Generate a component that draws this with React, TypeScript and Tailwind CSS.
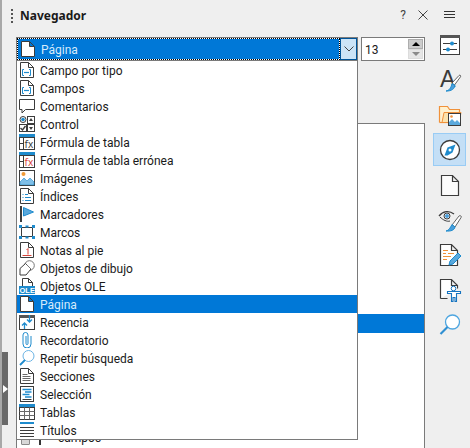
import React from 'react';

const DARK = '#3c3c3c';
const BLUE = '#1e8bcd';

function DocBase({ fill = '#fff' }: { fill?: string }) {
  return <path d="M1.500.5h8l5 5v10h-13zM9.500.5v5h5" fill={fill} stroke={DARK} strokeWidth="1" />;
}

function Ico({ children }: { children: React.ReactNode }) {
  return (
    <svg width="16" height="16" viewBox="0 0 16 16" fill="none" className="shrink-0">
      {children}
    </svg>
  );
}

function FieldIcon() {
  return (
    <Ico>
      <DocBase />
      <path d="M5 7.500H3.500v6H5M10 7.500h1.500v6H10" stroke={BLUE} />
      <path d="M5 10.500h5" stroke={BLUE} strokeWidth="1.200" />
    </Ico>
  );
}

function CommentIcon() {
  return (
    <Ico>
      <path d="M.5 1.500h15v10H6.500L3 15v-3.500H.5z" fill="#fff" stroke={DARK} />
    </Ico>
  );
}

function ControlIcon() {
  return (
    <Ico>
      <circle cx="4" cy="3.500" r="3" fill="#fff" stroke={DARK} />
      <circle cx="4" cy="3.500" r="1.800" fill={BLUE} />
      <rect x="8.500" y=".5" width="7" height="7" fill="#fff" stroke={DARK} />
      <path d="M12 2l2 3h-4z" fill={DARK} />
      <rect x=".5" y="8.500" width="7" height="7" fill="#fff" stroke={DARK} />
      <path d="M1.500 12l2 2 3-4" stroke={DARK} strokeWidth="1.400" />
      <rect x="8.500" y="8.500" width="7" height="7" fill="#fff" stroke={DARK} />
      <path d="M10 11h4l-2 3z" fill={DARK} />
    </Ico>
  );
}

function FormulaIcon({ color }: { color: string }) {
  return (
    <Ico>
      <rect x=".5" y="3.500" width="15" height="12" fill="#fff" stroke={DARK} />
      <rect x="0" y="0" width="16" height="3" fill={BLUE} />
      <path d="M.5 9.500h4M4.500 3.500v12" stroke={DARK} />
      <text x="5.600" y="14" fontSize="10" fontFamily="'Noto Sans', sans-serif" fill={color}>fx</text>
    </Ico>
  );
}

function ImageIcon() {
  return (
    <Ico>
      <rect x=".5" y=".5" width="15" height="15" fill="#fff" stroke={DARK} />
      <circle cx="4.500" cy="4" r="2" fill="#f09a37" />
      <path d="M1 14.500V12l4-4 3 3 3-3 4 4v3z" fill="#7fbfe8" stroke={BLUE} strokeWidth=".6" />
    </Ico>
  );
}

function IndexIcon() {
  return (
    <Ico>
      <DocBase />
      <path d="M3.500 6.500h1M6 6.500h3M3.500 9.500h1M6 9.500h6M3.500 12.500h1M6 12.500h6" stroke={BLUE} />
    </Ico>
  );
}

function BookmarkIcon() {
  return (
    <Ico>
      <rect x="1" y="0" width="2" height="16" fill={DARK} />
      <path d="M4.500 1.500L14.500 6l-10 4z" fill="#5aa9dd" stroke={BLUE} />
    </Ico>
  );
}

function FrameIcon() {
  return (
    <Ico>
      <rect x="2.500" y="3.500" width="11" height="9" fill="#fff" stroke={DARK} />
      <g fill={BLUE}>
        <rect x="0" y="1" width="3" height="3" />
        <rect x="13" y="1" width="3" height="3" />
        <rect x="0" y="12" width="3" height="3" />
        <rect x="13" y="12" width="3" height="3" />
        <rect x="6.500" y="1.500" width="3" height="2" />
        <rect x="6.500" y="12.500" width="3" height="2" />
      </g>
    </Ico>
  );
}

function FootnoteIcon() {
  return (
    <Ico>
      <DocBase />
      <path d="M9 6.500v6M7.500 8L9 6.500" stroke="#d9443a" />
      <path d="M3.500 13.500h9" stroke="#d9443a" />
    </Ico>
  );
}

function DrawIcon() {
  return (
    <Ico>
      <circle cx="10.500" cy="5.500" r="4.800" fill="#fff" stroke="#777" />
      <path d="M1 8.500L6.500 3.500 12 9 7 15H1z" fill="#fff" stroke={DARK} />
      <path d="M7.500 4.500l4.500 4.500" stroke="#777" />
    </Ico>
  );
}

function OleIcon() {
  return (
    <Ico>
      <path d="M3.500.5h6l4 4v4h-10zM9.500.5v4h4" fill="#fff" stroke={DARK} />
      <rect x="0" y="8" width="16" height="8" fill={BLUE} />
      <text x=".5" y="15" fontSize="7.500" fontWeight="700" fontFamily="'Liberation Sans', sans-serif" fill="#fff">OLE</text>
    </Ico>
  );
}

function PageIcon() {
  return (
    <Ico>
      <DocBase />
    </Ico>
  );
}

function RecencyIcon() {
  return (
    <Ico>
      <rect x=".5" y="2.500" width="15" height="13" fill="#fff" stroke={DARK} />
      <rect x="0" y="1" width="16" height="3" fill="#555" />
      <path d="M10.500 1v7M8 5.500l2.500 2.500L13 5.500M5.500 15V9M3 11.500L5.500 9 8 11.500" stroke={BLUE} strokeWidth="1.300" />
    </Ico>
  );
}

function ClipIcon() {
  return (
    <Ico>
      <path d="M12 4v8a4 4 0 0 1-8 0V3a2.500 2.500 0 0 1 5 0v8.500a1 1 0 0 1-2 0V4" stroke={BLUE} />
    </Ico>
  );
}

function SearchIcon() {
  return (
    <Ico>
      <circle cx="9.500" cy="6" r="5.500" fill="#fff" stroke="#6db4e4" />
      <path d="M6 10L1 15" stroke={BLUE} strokeWidth="1.800" />
    </Ico>
  );
}

function SectionIcon() {
  return (
    <Ico>
      <DocBase />
      <path d="M3.500 6.500h5M3.500 8.500h8M3.500 10.500h8M3.500 12.500h8" stroke="#6a6a6a" />
    </Ico>
  );
}

function SelectionIcon() {
  return (
    <Ico>
      <rect x="1.500" y=".5" width="13" height="15" fill="#fff" stroke={DARK} />
      <path d="M3.500 3.500h9M6 6h6.500M3.500 8.500h7M6 11h6.500" stroke={BLUE} strokeWidth="1.300" />
      <path d="M3.500 13.500h9" stroke={DARK} />
    </Ico>
  );
}

function TableIcon() {
  return (
    <Ico>
      <rect x=".5" y="3.500" width="15" height="12" fill="#fff" stroke={DARK} />
      <rect x="0" y="0" width="16" height="3" fill={BLUE} />
      <path d="M5.500 3.500v12M10.500 3.500v12M.5 7.500h15M.5 11.500h15" stroke="#6a6a6a" />
    </Ico>
  );
}

function HeadingIcon() {
  return (
    <Ico>
      <rect x="1" y="0" width="14" height="2" fill={BLUE} />
      <path d="M1 5.500h14M1 8.500h14M1 11.500h14M1 14.500h14" stroke={DARK} />
    </Ico>
  );
}

const items: { label: string; icon: React.ReactNode }[] = [
  { label: 'Campo por tipo', icon: <FieldIcon /> },
  { label: 'Campos', icon: <FieldIcon /> },
  { label: 'Comentarios', icon: <CommentIcon /> },
  { label: 'Control', icon: <ControlIcon /> },
  { label: 'Fórmula de tabla', icon: <FormulaIcon color={DARK} /> },
  { label: 'Fórmula de tabla errónea', icon: <FormulaIcon color="#d9443a" /> },
  { label: 'Imágenes', icon: <ImageIcon /> },
  { label: 'Índices', icon: <IndexIcon /> },
  { label: 'Marcadores', icon: <BookmarkIcon /> },
  { label: 'Marcos', icon: <FrameIcon /> },
  { label: 'Notas al pie', icon: <FootnoteIcon /> },
  { label: 'Objetos de dibujo', icon: <DrawIcon /> },
  { label: 'Objetos OLE', icon: <OleIcon /> },
  { label: 'Página', icon: <PageIcon /> },
  { label: 'Recencia', icon: <RecencyIcon /> },
  { label: 'Recordatorio', icon: <ClipIcon /> },
  { label: 'Repetir búsqueda', icon: <SearchIcon /> },
  { label: 'Secciones', icon: <SectionIcon /> },
  { label: 'Selección', icon: <SelectionIcon /> },
  { label: 'Tablas', icon: <TableIcon /> },
  { label: 'Títulos', icon: <HeadingIcon /> },
];

function SideIcon({ children }: { children: React.ReactNode }) {
  return (
    <svg width="24" height="24" viewBox="0 0 24 24" fill="none">
      {children}
    </svg>
  );
}

const sidebar: React.ReactNode[] = [
  <SideIcon key="props">
    <rect x="2.500" y="2.500" width="19" height="19" fill="#fff" stroke={DARK} />
    <rect x="2" y="2" width="20" height="3" fill="#555" />
    <path d="M5 10.500h14M5 16.500h14" stroke={DARK} />
    <circle cx="14" cy="10.500" r="2" fill={BLUE} />
    <circle cx="10" cy="16.500" r="2" fill={BLUE} />
  </SideIcon>,
  <SideIcon key="styles">
    <text x="2" y="19" fontSize="23" fontFamily="'Liberation Sans', sans-serif" fill="#3a3a3a">A</text>
    <path d="M14 15l7-7.500c1-1 2.200.3 1.500 1.300L16.500 17z" fill="#fff" stroke={DARK} strokeWidth=".8" />
    <path d="M8 23c3-.2 5-3 6-7.500l3 2c-.5 3-3 5.700-9 5.500z" fill="#4a9fdc" stroke={BLUE} />
  </SideIcon>,
  <SideIcon key="gallery">
    <path d="M1.500 19.500V3.500h8l2 3h10v3" fill="#fff1cf" stroke="#f0913a" strokeWidth="1.200" />
    <path d="M1.500 19.500h20" stroke="#f0913a" strokeWidth="1.200" />
    <path d="M4 19.500l2-10h17l-2 10z" fill="#fbe3ae" stroke="#f0913a" />
    <rect x="10.500" y="10.500" width="12" height="12" fill="#fff" stroke={DARK} />
    <circle cx="13.500" cy="13.500" r="1.300" fill="#f0913a" />
    <path d="M11 22v-3l3-3 3 3 2-2 3 3v2z" fill="#5aa9dd" />
  </SideIcon>,
  <SideIcon key="nav">
    <circle cx="12" cy="12" r="9.500" fill="#fff" stroke={DARK} strokeWidth="1.300" />
    <path d="M17.500 6.500L14.500 14.500 9.500 17.500 6.500 17.500 9.500 9.500z" fill={BLUE} />
    <circle cx="12" cy="12" r="1.500" fill="#fff" />
  </SideIcon>,
  <SideIcon key="page">
    <path d="M3.500 2.500h11l6 6v14h-17zM14.500 2.500v6h6" fill="#fbfbfb" stroke={DARK} strokeWidth="1.200" />
  </SideIcon>,
  <SideIcon key="view">
    <path d="M1 8c4-5 10-6 15-2" stroke={DARK} strokeWidth="1.300" />
    <path d="M2 9c3 3 7 5 10 4" stroke={DARK} />
    <circle cx="9" cy="8" r="3" fill="#fff" stroke={DARK} />
    <circle cx="9" cy="8" r="2" fill="#4a9fdc" />
    <path d="M14 17l7-9c1-1 3 .2 2 1.600L17 19z" fill="#fff" stroke={DARK} strokeWidth=".8" />
    <path d="M8 23c3-.5 4-3 6-6.500l3 2.500c-.5 3-4 4.500-9 4z" fill="#4a9fdc" stroke={BLUE} />
  </SideIcon>,
  <SideIcon key="manage">
    <path d="M2.500 1.500h11l6 6v15h-17zM13.500 1.500v6h6" fill="#fff" stroke={DARK} strokeWidth="1.200" />
    <path d="M5 7.500h5M5 10.500h3M10 10.500h6M5 13.500h8M5 16.500h4" stroke="#f0913a" strokeWidth="1.100" />
    <path d="M11 22l1-4 8-8 3 3-8 8z" fill="#5aa9dd" stroke={BLUE} />
  </SideIcon>,
  <SideIcon key="access">
    <path d="M2.500 20.500V1.500h11l6 6v3M13.500 1.500v6h6M2.500 20.500h7" stroke={DARK} strokeWidth="1.200" fill="#fff" />
    <circle cx="15.500" cy="10.500" r="2.300" fill="#fff" stroke="#1574c0" />
    <path d="M9.500 13.500h13v2h-4v8h-1.500v-4h-2v4H13.500v-8h-4z" fill="#fff" stroke="#1574c0" strokeWidth="1.100" />
  </SideIcon>,
  <SideIcon key="find">
    <circle cx="14.500" cy="9" r="7" fill="#fff" stroke="#4ea6e0" strokeWidth="1.300" />
    <path d="M9.500 14L2.500 21" stroke="#2f8fd2" strokeWidth="2.200" />
  </SideIcon>,
];

export default function App() {
  return (
    <div className="relative flex h-[448px] w-[470px] overflow-hidden bg-[#efefef] font-['Roboto',sans-serif] text-[12px] text-[#1a1a1a]">
      {/* collapse handle */}
      <div className="flex w-[8px] shrink-0 flex-col border-l-2 border-[#a8a8a8]">
        <div className="mt-[352px] flex h-[73px] items-center justify-center bg-[#696969]">
          <div className="h-0 w-0 border-y-[4px] border-l-[5px] border-y-transparent border-l-white" />
        </div>
      </div>

      <div className="flex w-[417px] shrink-0 flex-col">
        <div className="flex h-[37px] shrink-0 items-start pt-[6px]">
          <div className="ml-[3px] mt-[3px] flex flex-col gap-[2px]">
            <span className="h-[2px] w-[2px] bg-[#555]" />
            <span className="h-[2px] w-[2px] bg-[#555]" />
            <span className="h-[2px] w-[2px] bg-[#555]" />
            <span className="h-[2px] w-[2px] bg-[#555]" />
          </div>
          <span className="ml-[7px] font-['Noto_Sans',sans-serif] font-bold leading-[20px]">Navegador</span>
          <span className="ml-auto leading-[18px] text-[#444]">?</span>
          <svg width="10" height="10" viewBox="0 0 10 10" className="relative z-10 ml-[12px] mr-[-3px] mt-[4px]">
            <path d="M.5.5l9 9M9.500.5l-9 9" stroke="#444" fill="none" />
          </svg>
        </div>

        <div className="flex h-[24px] shrink-0 items-center gap-[3px] pl-[8px]">
          {/* spacer for the open combo, drawn over the page */}
          <div className="h-[23px] w-[342px] shrink-0" />
          <div className="flex h-[24px] w-[64px] shrink-0 items-center justify-between border border-[#7a7a7a] bg-white pl-[3px] pr-[1px]">
            <span className="pt-[1px]">13</span>
            <div className="flex w-[15px] flex-col">
              <div className="flex h-[10px] items-center justify-center border border-[#adadad] bg-[#cccccc]">
                <div className="h-0 w-0 border-x-[4px] border-b-[4px] border-x-transparent border-b-black" />
              </div>
              <div className="flex h-[10px] items-center justify-center border border-[#dcdcdc] bg-[#e6e6e6]">
                <div className="h-0 w-0 border-x-[4px] border-t-[4px] border-x-transparent border-t-[#8a8a8a]" />
              </div>
            </div>
          </div>
        </div>

        <div className="h-[62px] shrink-0" />

        {/* tree behind the open list */}
        <div className="ml-[8px] flex min-h-0 flex-1 flex-col border-x border-t border-[#7a7a7a] bg-white">
          <div className="h-[190px] shrink-0" />
          <div className="h-[19px] shrink-0 bg-[#0078d7]" />
          <div className="h-[95px] shrink-0" />
          <div className="flex h-[19px] shrink-0 items-center">
            <div className="ml-[4px] h-[14px] w-[9px] rounded-[1px] border border-[#8a8a8a] bg-[#d8d8d8]" />
            <div className="ml-[9px] h-[14px] w-[2px] bg-[#333]" />
            <span className="ml-[17px] mt-[1px]">campos</span>
          </div>
        </div>
      </div>

      <aside className="flex w-[45px] shrink-0 flex-col pl-[8px]">
        <div className="flex h-[28px] w-[33px] flex-col items-center justify-center gap-[2px] pt-[1px]">
          <span className="h-[1px] w-[11px] bg-[#333]" />
          <span className="h-[1px] w-[11px] bg-[#333]" />
          <span className="h-[1px] w-[11px] bg-[#333]" />
        </div>
        <div className="flex flex-col gap-[2px]">
          {sidebar.map((icon, i) => (
            <div
              key={i}
              className={
                i === 3
                  ? 'flex h-[33px] w-[33px] items-center justify-center border border-[#99ccf5] bg-[#c4dff6]'
                  : 'flex h-[33px] w-[33px] items-center justify-center'
              }
            >
              {icon}
            </div>
          ))}
        </div>
      </aside>

      {/* open combo box and its list */}
      <div className="absolute left-[16px] top-[37px] w-[342px]">
        <div className="flex h-[24px] border border-[#7a7a7a] bg-white">
          <div className="flex min-w-0 flex-1 items-center border border-dotted border-black bg-[#0078d7] bg-clip-padding pl-[2px]">
            <PageIcon />
            <span className="ml-[5px] pt-[1px] text-[#d6ebfb]">Página</span>
          </div>
          <div className="flex h-full w-[17px] items-center justify-center border border-[#005499] bg-[#cce4f7]">
            <svg width="10" height="6" viewBox="0 0 10 6">
              <path d="M.5.5L5 5 9.500.5" stroke="#444" fill="none" />
            </svg>
          </div>
        </div>
        <ul className="border border-t-0 border-[#7a7a7a] bg-white">
          {items.map((item) => (
            <li
              key={item.label}
              className={
                item.label === 'Página'
                  ? 'flex h-[18px] items-center gap-[5px] bg-[#0078d7] pl-[2px] text-[#d6ebfb]'
                  : 'flex h-[18px] items-center gap-[5px] pl-[2px]'
              }
            >
              {item.icon}
              <span className="mt-[1px] whitespace-nowrap leading-[18px]">{item.label}</span>
            </li>
          ))}
        </ul>
      </div>
    </div>
  );
}
